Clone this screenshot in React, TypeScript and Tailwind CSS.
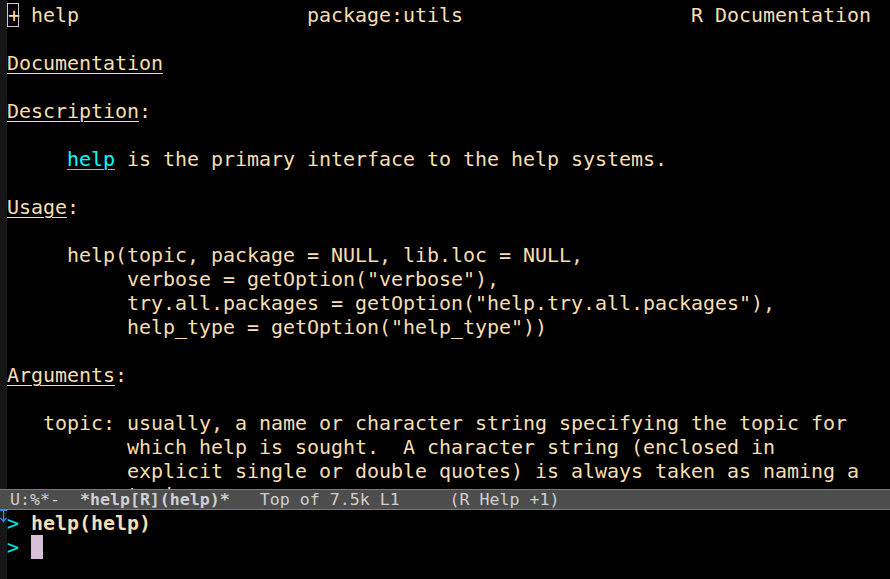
import React from "react";

const W = "text-[#f5deb3]";

function Row({ children }: { children?: React.ReactNode }) {
  return <div className="h-[24px] leading-[24px] whitespace-pre">{children ?? " "}</div>;
}

function H({ t }: { t: string }) {
  return (
    <Row>
      <span className="underline decoration-1 underline-offset-[3px]">{t}</span>:
    </Row>
  );
}

export default function App() {
  return (
    <div
      className="w-[890px] h-[579px] bg-black overflow-hidden flex flex-col"
      style={{ fontFamily: '"DejaVu Sans Mono", monospace' }}
    >
      {/* main help window */}
      <div className="h-[489px] flex overflow-hidden">
        <div className="w-[7px] shrink-0 bg-[#161616]" />
        <div className={`flex-1 pt-[3px] text-[20px] tracking-[-0.04px] ${W}`}>
          <Row>
            <span className="inline-block w-[12px] h-[24px] align-top box-border border border-[#d8bfd8] text-center leading-[22px]">+</span>
            {" help                   package:utils                   R Documentation"}
          </Row>
          <Row />
          <Row>
            <span className="underline decoration-1 underline-offset-[3px]">Documentation</span>
          </Row>
          <Row />
          <H t="Description" />
          <Row />
          <Row>
            {"     "}
            <span className="text-[#00ffff] underline decoration-1 underline-offset-[3px]">help</span>
            {" is the primary interface to the help systems."}
          </Row>
          <Row />
          <H t="Usage" />
          <Row />
          <Row>{"     help(topic, package = NULL, lib.loc = NULL,"}</Row>
          <Row>{'          verbose = getOption("verbose"),'}</Row>
          <Row>{'          try.all.packages = getOption("help.try.all.packages"),'}</Row>
          <Row>{'          help_type = getOption("help_type"))'}</Row>
          <Row />
          <H t="Arguments" />
          <Row />
          <Row>{"   topic: usually, a name or character string specifying the topic for"}</Row>
          <Row>{"          which help is sought.  A character string (enclosed in"}</Row>
          <Row>{"          explicit single or double quotes) is always taken as naming a"}</Row>
          <Row>{"          topic."}</Row>
        </div>
      </div>

      {/* mode line */}
      <div className="h-[21px] shrink-0 bg-[#4d4d4d] border-t border-b border-[#7a7a7a] flex items-center pl-[10px] text-[16.6px] leading-[19px] text-[#cfcfcf] whitespace-pre overflow-hidden">
        <span>{"U:%*-  "}</span>
        <span className="font-bold">*help[R](help)*</span>
        <span>{"   Top of 7.5k L1     (R Help +1)"}</span>
      </div>

      {/* R process window */}
      <div className="flex-1 flex">
        <div className="w-[7px] shrink-0 bg-[#161616] relative">
          <svg className="absolute left-0 top-0" width="7" height="13" viewBox="0 0 7 13">
            <path d="M0 0.5H7M3.5 0.5V11.5M0.5 8L3.5 11.5L6.5 8" stroke="#2a8fff" strokeWidth="1.2" fill="none" />
          </svg>
        </div>
        <div className={`flex-1 pt-[1px] text-[20px] tracking-[-0.04px] ${W}`}>
          <Row>
            <span className="text-[#00e5ee]">{"> "}</span>
            <span className="font-bold">help(help)</span>
          </Row>
          <Row>
            <span className="text-[#00e5ee]">{"> "}</span>
            <span className="inline-block w-[12px] h-[24px] align-top bg-[#d8bfd8]" />
          </Row>
        </div>
      </div>
    </div>
  );
}
